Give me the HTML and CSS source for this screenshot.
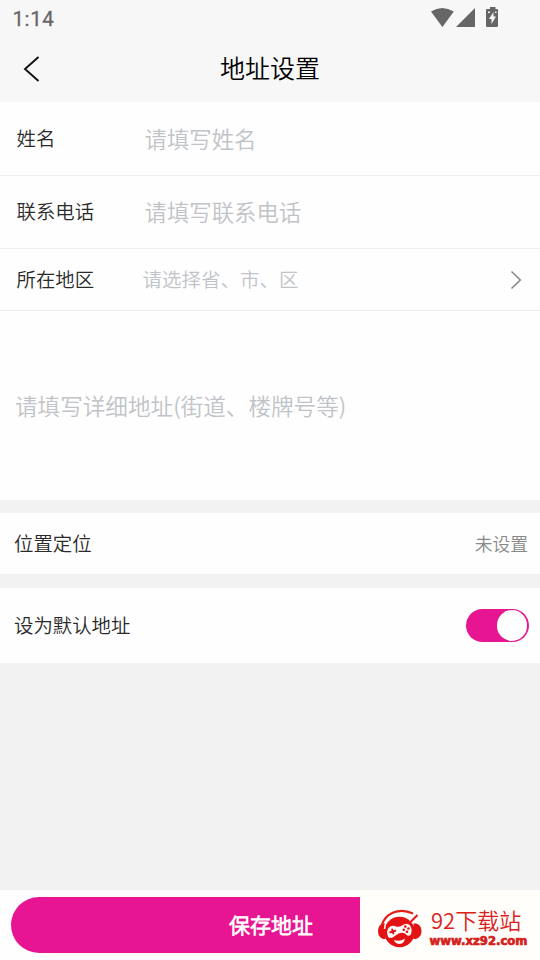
FILE: index.html
```html
<!DOCTYPE html>
<html lang="zh-CN">
<head>
<meta charset="utf-8">
<title>地址设置</title>
<link rel="stylesheet" href="styles.css">
</head>
<body>
<div class="screen">
  <div class="statusbar">
    <span class="clock">1:14</span>
    <svg class="status-icons" width="70" height="24" viewBox="0 0 70 24" fill="#666">
      <path d="M1 11.5Q12 4.5 23.8 11.5L12.4 27Z"/>
      <path d="M45 8V27H26Z"/>
      <path fill-rule="evenodd" d="M58 9H60V7H65.500V9H67Q68 9 68 10V26Q68 27 67 27H57Q56 27 56 26V10Q56 9 57 9ZM63.500 12L59 19H61.500V24L66 16.500H63.500Z"/>
      <path d="M58 11.500H60V13H58ZM65 11.500H66.500V13H65Z" fill="#f7f7f7"/>
    </svg>
  </div>
  <header class="navbar">
    <svg class="back" width="18" height="28" viewBox="0 0 18 28" fill="none" stroke="#111" stroke-width="1.9"><path d="M15.500 2L2 14L15.500 26"/></svg>
    <h1 class="title">地址设置</h1>
  </header>
  <main class="form">
    <div class="row name"><span class="label">姓名</span><span class="hint">请填写姓名</span></div>
    <div class="row phone"><span class="label">联系电话</span><span class="hint">请填写联系电话</span></div>
    <div class="row region"><span class="label">所在地区</span><span class="hint small">请选择省、市、区</span>
      <svg class="chevron" width="12" height="20" viewBox="0 0 12 20" fill="none" stroke="#888" stroke-width="1.6"><path d="M1.500 1.500L10.300 10L1.500 18.500"/></svg>
    </div>
    <div class="detail"><span class="hint">请填写详细地址(街道、楼牌号等)</span></div>
    <div class="row location"><span class="label">位置定位</span><span class="value">未设置</span></div>
    <div class="row default"><span class="label">设为默认地址</span><span class="switch"><span class="knob"></span></span></div>
  </main>
  <footer class="bottom">
    <div class="save"><span>保存地址</span></div>
    <div class="brand">
      <svg class="logo" width="46" height="40" viewBox="0 0 46 40">
        <path d="M4.500 17C8 4 22-2 36 4.500" fill="none" stroke="#e31d1a" stroke-width="2.200"/>
        <path d="M8.500 14.500H6Q1 16 1 22Q1 28 6 30H8.500ZM36.500 14.500H39Q44.500 16 44.500 22Q44.500 28 39 30H36.500Z" fill="#e31313"/>
        <circle cx="22.500" cy="23" r="15.300" fill="#e31313"/>
        <path d="M7.500 20C8 7 22 3 32.500 9.500L39 4" fill="none" stroke="#fffefa" stroke-width="1.500"/>
        <path d="M33 13.500L40.500 6" stroke="#e31313" stroke-width="2"/>
        <path d="M11.500 19Q15 15.500 19 17.500Q22 18.500 25 16.500Q30 13 33 16.500Q36 21 33.500 26Q31 28 28 24.500Q23 22.500 18.500 26.500Q13 31 11 27.500Q9 23 11.500 19Z" fill="#fffefa"/>
        <path d="M12.500 23.500L19 21.500M14.900 19.700L16.600 25.300" stroke="#e31313" stroke-width="1.900"/>
        <g fill="#e31313"><circle cx="28.300" cy="17.600" r="1.300"/><circle cx="31.400" cy="19.500" r="1.300"/><circle cx="26.800" cy="20.700" r="1.300"/><circle cx="30" cy="22.700" r="1.300"/></g>
        <path d="M17 31Q23 33 28 29.500Q27 35 22 35Q18 34.500 17 31Z" fill="#fffefa"/>
      </svg>
      <div class="brand-text">
        <span class="brand-name">92下载站</span>
        <svg class="brand-url" width="104" height="16" viewBox="0 0 104 16"><text class="url" x="1.500" y="12" textLength="98" lengthAdjust="spacingAndGlyphs">www.xz92.com</text></svg>
      </div>
    </div>
  </footer>
</div>
</body>
</html>
```
FILE: styles.css
```css
* { box-sizing: border-box; }
body { margin: 0; font-family: "Noto Sans CJK SC DemiLight", "Noto Sans CJK SC", sans-serif; font-weight: 350; color: #2a2a2a; }
.screen { width: 540px; height: 960px; display: flex; flex-direction: column; background: #f2f2f2; overflow: hidden; }
.statusbar { height: 36px; background: #f7f7f7; display: flex; justify-content: space-between; padding: 0 40px 0 12.5px; }
.clock { font: 400 20.5px/38px Roboto, sans-serif; color: #666; letter-spacing: .6px; -webkit-text-stroke: .3px #666; }
.status-icons { width: 70px; height: 36px; overflow: visible; transform: translate(0, -6px); }
.navbar { height: 66px; background: #f7f7f7; display: grid; grid-template-columns: 60px 1fr 60px; align-items: center; }
.back { margin-left: 23px; }
.title { margin: 0; text-align: center; font-size: 25px; font-weight: 350; line-height: 36px; color: #000; padding-bottom: 5px; }
.form { display: flex; flex-direction: column; }
.row { display: flex; align-items: center; background: #fefefe; padding: 0 12px 2px 16.5px; }
.label { font-size: 19.4px; line-height: 28px; }
.hint { font-size: 22.4px; line-height: 32px; color: #c0c3c7; }
.name, .phone, .region { border-bottom: 1px solid #efefef; }
.name .label, .phone .label, .region .label { width: 128px; }
.name { height: 74px; }
.phone { height: 73px; padding-bottom: 3px; }
.region { height: 62px; padding-right: 18px; }
.region .label { width: 126px; }
.hint.small { font-size: 19.5px; }
.chevron { margin: 2px 0 0 auto; }
.detail { height: 189px; background: #fefefe; display: flex; align-items: center; padding: 0 15px; }
.detail .hint { font-size: 22.6px; }
.location { height: 61px; margin-top: 13px; padding-left: 14px; }
.value { margin-left: auto; font-size: 17.8px; color: #888; }
.default { height: 75px; margin-top: 14px; padding: 0 11px 2px 14px; }
.switch { margin: 2px 0 0 auto; width: 63px; height: 33px; border-radius: 17px; background: #e71592; display: flex; justify-content: flex-end; align-items: center; padding-right: 2px; }
.knob { width: 30.5px; height: 30.5px; border-radius: 50%; background: #fff; }
.bottom { height: 70px; margin-top: auto; background: #fefefe; display: flex; }
.save { width: 349px; height: 56px; margin: 7px 0 0 11px; border-radius: 28px 0 0 28px; background: #e71592; color: #fff; font-size: 21px; font-weight: 700; line-height: 54px; padding-left: 218px; }
.brand { flex: 1; background: #fffefa; display: flex; padding-left: 17px; }
.logo { margin-top: 19px; }
.brand-text { display: flex; flex-direction: column; margin-left: 7px; padding-top: 17px; }
.brand-name { font-size: 22px; line-height: 24px; color: #dc2020; padding-left: 1px; }
.brand-url { margin-left: -2px; margin-top: 2px; }
.url { font: 700 11.5px "DejaVu Sans", sans-serif; fill: #d51f1f; stroke: #d51f1f; stroke-width: .7px; }
```
